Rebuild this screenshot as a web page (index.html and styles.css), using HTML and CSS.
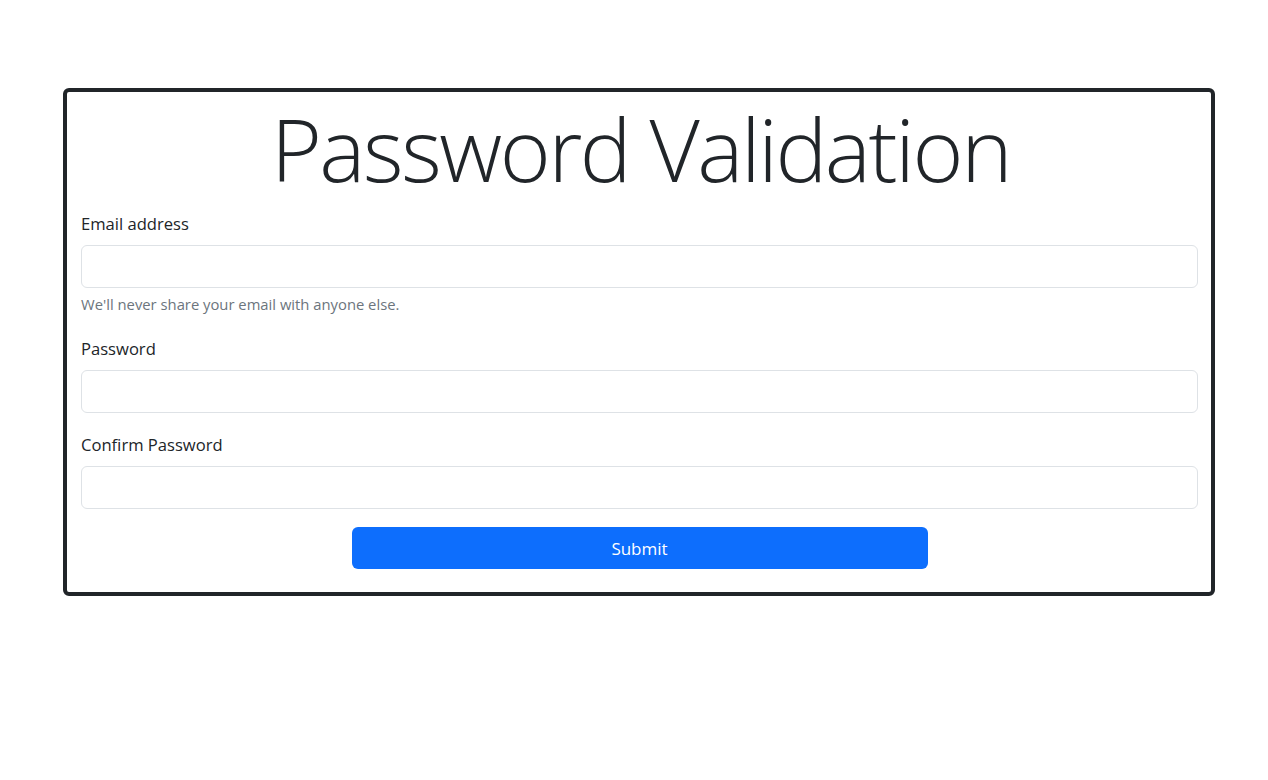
FILE: index.html
```html
<!DOCTYPE html>
<html lang="en">
<head>
<meta charset="utf-8">
<title>Password Validation</title>
<link rel="stylesheet" href="styles.css">
</head>
<body>
<main class="page">
  <form class="card">
    <h1 class="title">Password Validation</h1>
    <div class="group">
      <label class="label" for="email">Email address</label>
      <input class="input" id="email" type="email">
      <div class="help">We'll never share your email with anyone else.</div>
    </div>
    <div class="group">
      <label class="label" for="pw">Password</label>
      <input class="input" id="pw" type="password">
    </div>
    <div class="group">
      <label class="label" for="pw2">Confirm Password</label>
      <input class="input" id="pw2" type="password">
    </div>
    <div class="actions">
      <button class="btn" type="button">Submit</button>
    </div>
  </form>
</main>
</body>
</html>
```
FILE: styles.css
```css
* { box-sizing: border-box; }
html, body { margin: 0; padding: 0; background: #fff; }
body {
  font-family: "Open Sans", "Noto Sans", "Liberation Sans", sans-serif;
  color: #212529;
}
.page { padding-top: 88px; }
.card {
  margin: 0 53px 0 63px;
  border: 4px solid #212529;
  border-radius: 6px;
  padding: 0 13px 23px 14px;
  display: flex;
  flex-direction: column;
}
.title {
  margin: 0 0 8px;
  text-align: center;
  font-family: "Open Sans", sans-serif;
  font-weight: 300;
  font-size: 87px;
  line-height: 112px;
  letter-spacing: -2.4px;
  text-indent: 2px;
  color: #212529;
}
.group { display: flex; flex-direction: column; }
.label {
  font-size: 16.6px;
  line-height: 24px;
  margin-bottom: 9px;
  color: #212529;
}
.input {
  height: 43px;
  border: 1px solid #dee2e6;
  border-radius: 6px;
  background: #fff;
  font: inherit;
  padding: 6px 12px;
}
.help {
  margin-top: 6px;
  font-size: 14.8px;
  line-height: 20px;
  color: #6c757d;
  margin-bottom: 23px;
}
.group:nth-child(3) { margin-bottom: 20px; }
.actions { display: flex; justify-content: center; margin-top: 18px; }
.btn {
  width: 576px;
  height: 42px;
  border: 0;
  border-radius: 6px;
  background: #0d6efd;
  color: #fff;
  font: inherit;
  font-size: 17px;
}
```
